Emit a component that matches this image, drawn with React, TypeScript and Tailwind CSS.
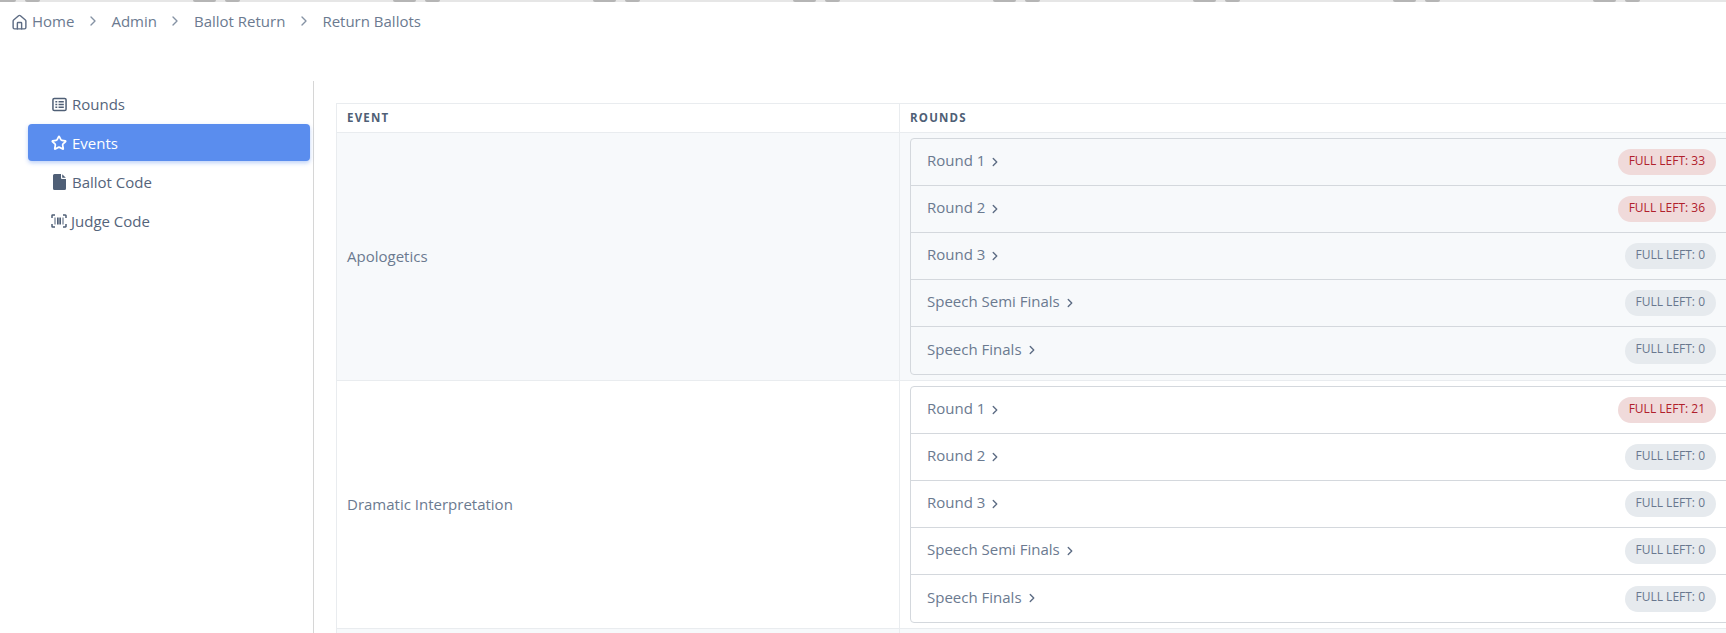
import { ChevronRight, House, Star } from "lucide-react";

const events = [
  {
    name: "Apologetics",
    striped: true,
    rounds: [
      { label: "Round 1", left: 33 },
      { label: "Round 2", left: 36 },
      { label: "Round 3", left: 0 },
      { label: "Speech Semi Finals", left: 0 },
      { label: "Speech Finals", left: 0 },
    ],
  },
  {
    name: "Dramatic Interpretation",
    striped: false,
    rounds: [
      { label: "Round 1", left: 21 },
      { label: "Round 2", left: 0 },
      { label: "Round 3", left: 0 },
      { label: "Speech Semi Finals", left: 0 },
      { label: "Speech Finals", left: 0 },
    ],
  },
];

const crumbs = ["Admin", "Ballot Return", "Return Ballots"];

const TableIcon = () => (
  <svg width="15" height="15" viewBox="0 0 16 16" fill="none" stroke="#4f5f76" strokeWidth="1.6">
    <rect x="1" y="1.5" width="14" height="13" rx="1.5" />
    <path d="M3.6 5h2M3.6 8h2M3.6 11h2M7 5h5.6M7 8h5.6M7 11h5.6" />
  </svg>
);

const FileIcon = () => (
  <svg width="13" height="16" viewBox="0 0 13 16" fill="#4f5f76">
    <path d="M1.5 0H8v4a1 1 0 0 0 1 1h4v9.5a1.5 1.5 0 0 1-1.5 1.5h-10A1.5 1.5 0 0 1 0 14.5v-13A1.5 1.5 0 0 1 1.5 0z" />
    <path d="M9.2 0.2L12.8 3.8H9.2z" />
  </svg>
);

const BarcodeIcon = () => (
  <svg width="16" height="14" viewBox="0 0 16 14" fill="none" stroke="#4f5f76">
    <path d="M1 4V1.6A.6.6 0 0 1 1.6 1H4M12 1h2.4a.6.6 0 0 1 .6.6V4M15 10v2.4a.6.6 0 0 1-.6.6H12M4 13H1.6a.6.6 0 0 1-.6-.6V10" strokeWidth="1.5" />
    <path d="M4 3.5v7M6.5 3.5v7M9.5 3.5v7M12 3.5v7" strokeWidth="1" />
    <path d="M8 3.5v7" strokeWidth="1.4" />
  </svg>
);

const TopStrip = () => (
  <div className="h-[2px] bg-[#e6e6e6] flex overflow-hidden">
    {Array.from({ length: 9 }).map((_, i) => (
      <div key={i} className="w-[200px] shrink-0 flex">
        <div className="w-[16px] bg-[#b5b5b5] rounded-br-[4px]" />
        <div className="w-[9px]" />
        <div className="w-[15px] bg-[#b5b5b5] rounded-b-[5px]" />
        <div className="w-[153px]" />
        <div className="w-[7px] bg-[#b5b5b5] rounded-bl-[4px]" />
      </div>
    ))}
  </div>
);

const App = () => {
  return (
    <div className="w-[1726px] h-[633px] overflow-hidden bg-white font-['Open_Sans',sans-serif] text-[15px] text-[#6b7a90]">
      <TopStrip />

      <nav className="h-[79px] pl-[11px] pt-[8px] flex items-start leading-[22px] text-[#6b7a90]">
        <House size={17} strokeWidth={2} className="mt-[4px] mr-[4px] text-[#5d6c84]" />
        <span>Home</span>
        {crumbs.map((c) => (
          <span key={c} className="flex items-center">
            <ChevronRight size={16} strokeWidth={2} className="mx-[10.5px] text-[#8592a4]" />
            {c}
          </span>
        ))}
      </nav>

      <div className="flex">
        <aside className="w-[314px] shrink-0 h-[552px] border-r border-[#d6d6d6] pl-[28px] pr-[3px] pt-[4px] text-[#55647b]">
          <div className="h-[39px] flex items-center pl-[24px] gap-[5px]">
            <TableIcon />
            Rounds
          </div>
          <div className="h-[37px] flex items-center pl-[23px] pt-[1px] gap-[5px] rounded-[4px] bg-[#5a8dee] text-white shadow-[0_2px_4px_rgba(90,141,238,0.4)]">
            <Star size={16} strokeWidth={2.6} />
            Events
          </div>
          <div className="h-[41px] flex items-center pl-[25px] pt-[1px] gap-[6px]">
            <FileIcon />
            Ballot Code
          </div>
          <div className="h-[37px] flex items-center pl-[23px] pt-[1px] gap-[4px]">
            <BarcodeIcon />
            Judge Code
          </div>
        </aside>

        <main className="ml-[22px] pt-[22px] w-[1500px] shrink-0">
          <div className="border-l border-t border-[#e9ecef]">
            <div className="flex h-[29px] border-b border-[#e9ecef] text-[11.5px] font-bold tracking-[1.2px] text-[#4f5f76]">
              <div className="w-[563px] shrink-0 border-r border-[#e9ecef] pl-[10px] flex items-center">EVENT</div>
              <div className="pl-[10px] flex items-center">ROUNDS</div>
            </div>

            {events.map((ev) => (
              <div key={ev.name} className={`flex border-b border-[#e9ecef] ${ev.striped ? "bg-[#f7f9fb]" : "bg-white"}`}>
                <div className="w-[563px] shrink-0 border-r border-[#e9ecef] pl-[10px] pb-[1px] flex items-center">{ev.name}</div>
                <div className="pl-[10px] py-[5px] w-[826px] shrink-0">
                  <div className="rounded-[4px] border border-[#d4d8dd] w-[900px]">
                    {ev.rounds.map((r, i) => (
                      <div
                        key={r.label}
                        className={`w-[899px] flex items-center justify-between pl-[16px] pr-[94px] first:h-[46px] last:h-[48px] h-[47px] ${
                          i > 0 ? "border-t border-[#d4d8dd]" : ""
                        }`}
                      >
                        <span className="flex items-center gap-[3px] pb-[3px]">
                          {r.label}
                          <ChevronRight size={14} strokeWidth={2.4} className="mt-[2px] text-[#5d6c84]" />
                        </span>
                        <span
                          className={`h-[26px] px-[11px] pb-[3px] rounded-full flex items-center text-[12px] ${
                            r.left > 0 ? "bg-[#f0dada] text-[#b0202c]" : "bg-[#e6eaee] text-[#69788f]"
                          }`}
                        >
                          FULL LEFT: {r.left}
                        </span>
                      </div>
                    ))}
                  </div>
                </div>
              </div>
            ))}
            <div className="flex h-[40px] bg-[#f7f9fb]">
              <div className="w-[563px] shrink-0 border-r border-[#e9ecef]" />
            </div>
          </div>
        </main>
      </div>
    </div>
  );
};

export default App;
